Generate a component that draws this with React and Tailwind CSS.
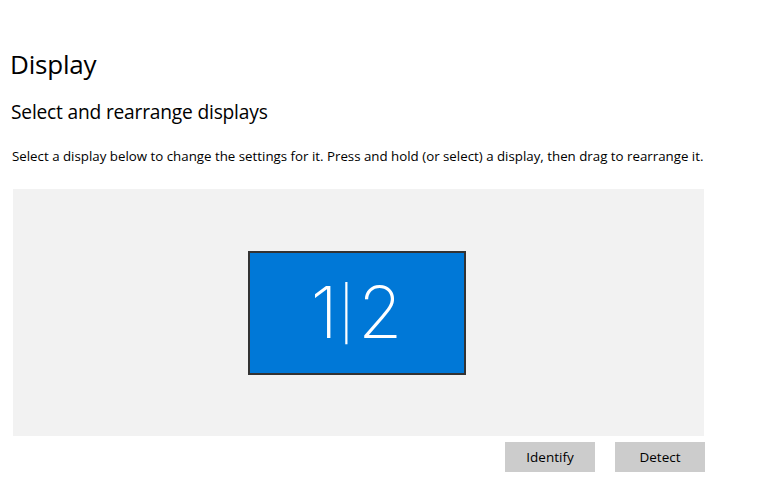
export default function App() {
  return (
    <div
      className="w-[767px] h-[503px] bg-white text-black overflow-hidden"
      style={{ fontFamily: '"Open Sans", "Noto Sans", sans-serif' }}
    >
      <div className="pl-[10px] pt-[46px]">
        <h1 className="text-[26px] leading-[36px] font-normal tracking-[-0.2px]">Display</h1>
      </div>
      <div className="pl-[11px] pt-[17px]">
        <h2 className="text-[19.2px] leading-[26px] font-normal tracking-[-0.2px]">
          Select and rearrange displays
        </h2>
      </div>
      <p className="pl-[12px] pt-[22px] text-[13.3px] leading-[18px]">
        Select a display below to change the settings for it. Press and hold (or select) a display, then drag to rearrange it.
      </p>
      <div className="ml-[13px] mt-[24px] w-[691px] h-[247px] bg-[#f2f2f2] flex items-center justify-center">
        <div className="w-[218px] h-[124px] mr-[4px] bg-[#0078d7] border-2 border-[#333333] flex items-center justify-center">
          <div
            className="flex items-center text-white font-extralight leading-none pb-[2px]"
            style={{ fontFamily: 'Inter, "Open Sans", sans-serif' }}
          >
            <span className="text-[72px] tracking-[-3px]">1</span>
            <span className="text-[52px] mx-[4px] mt-[4px]">|</span>
            <span className="text-[72px]">2</span>
          </div>
        </div>
      </div>
      <div className="flex gap-[20px] pl-[505px] pt-[6px]">
        <button className="w-[90px] h-[30px] bg-[#cccccc] text-[13.5px] text-black">Identify</button>
        <button className="w-[90px] h-[30px] bg-[#cccccc] text-[13.5px] text-black">Detect</button>
      </div>
    </div>
  );
}
